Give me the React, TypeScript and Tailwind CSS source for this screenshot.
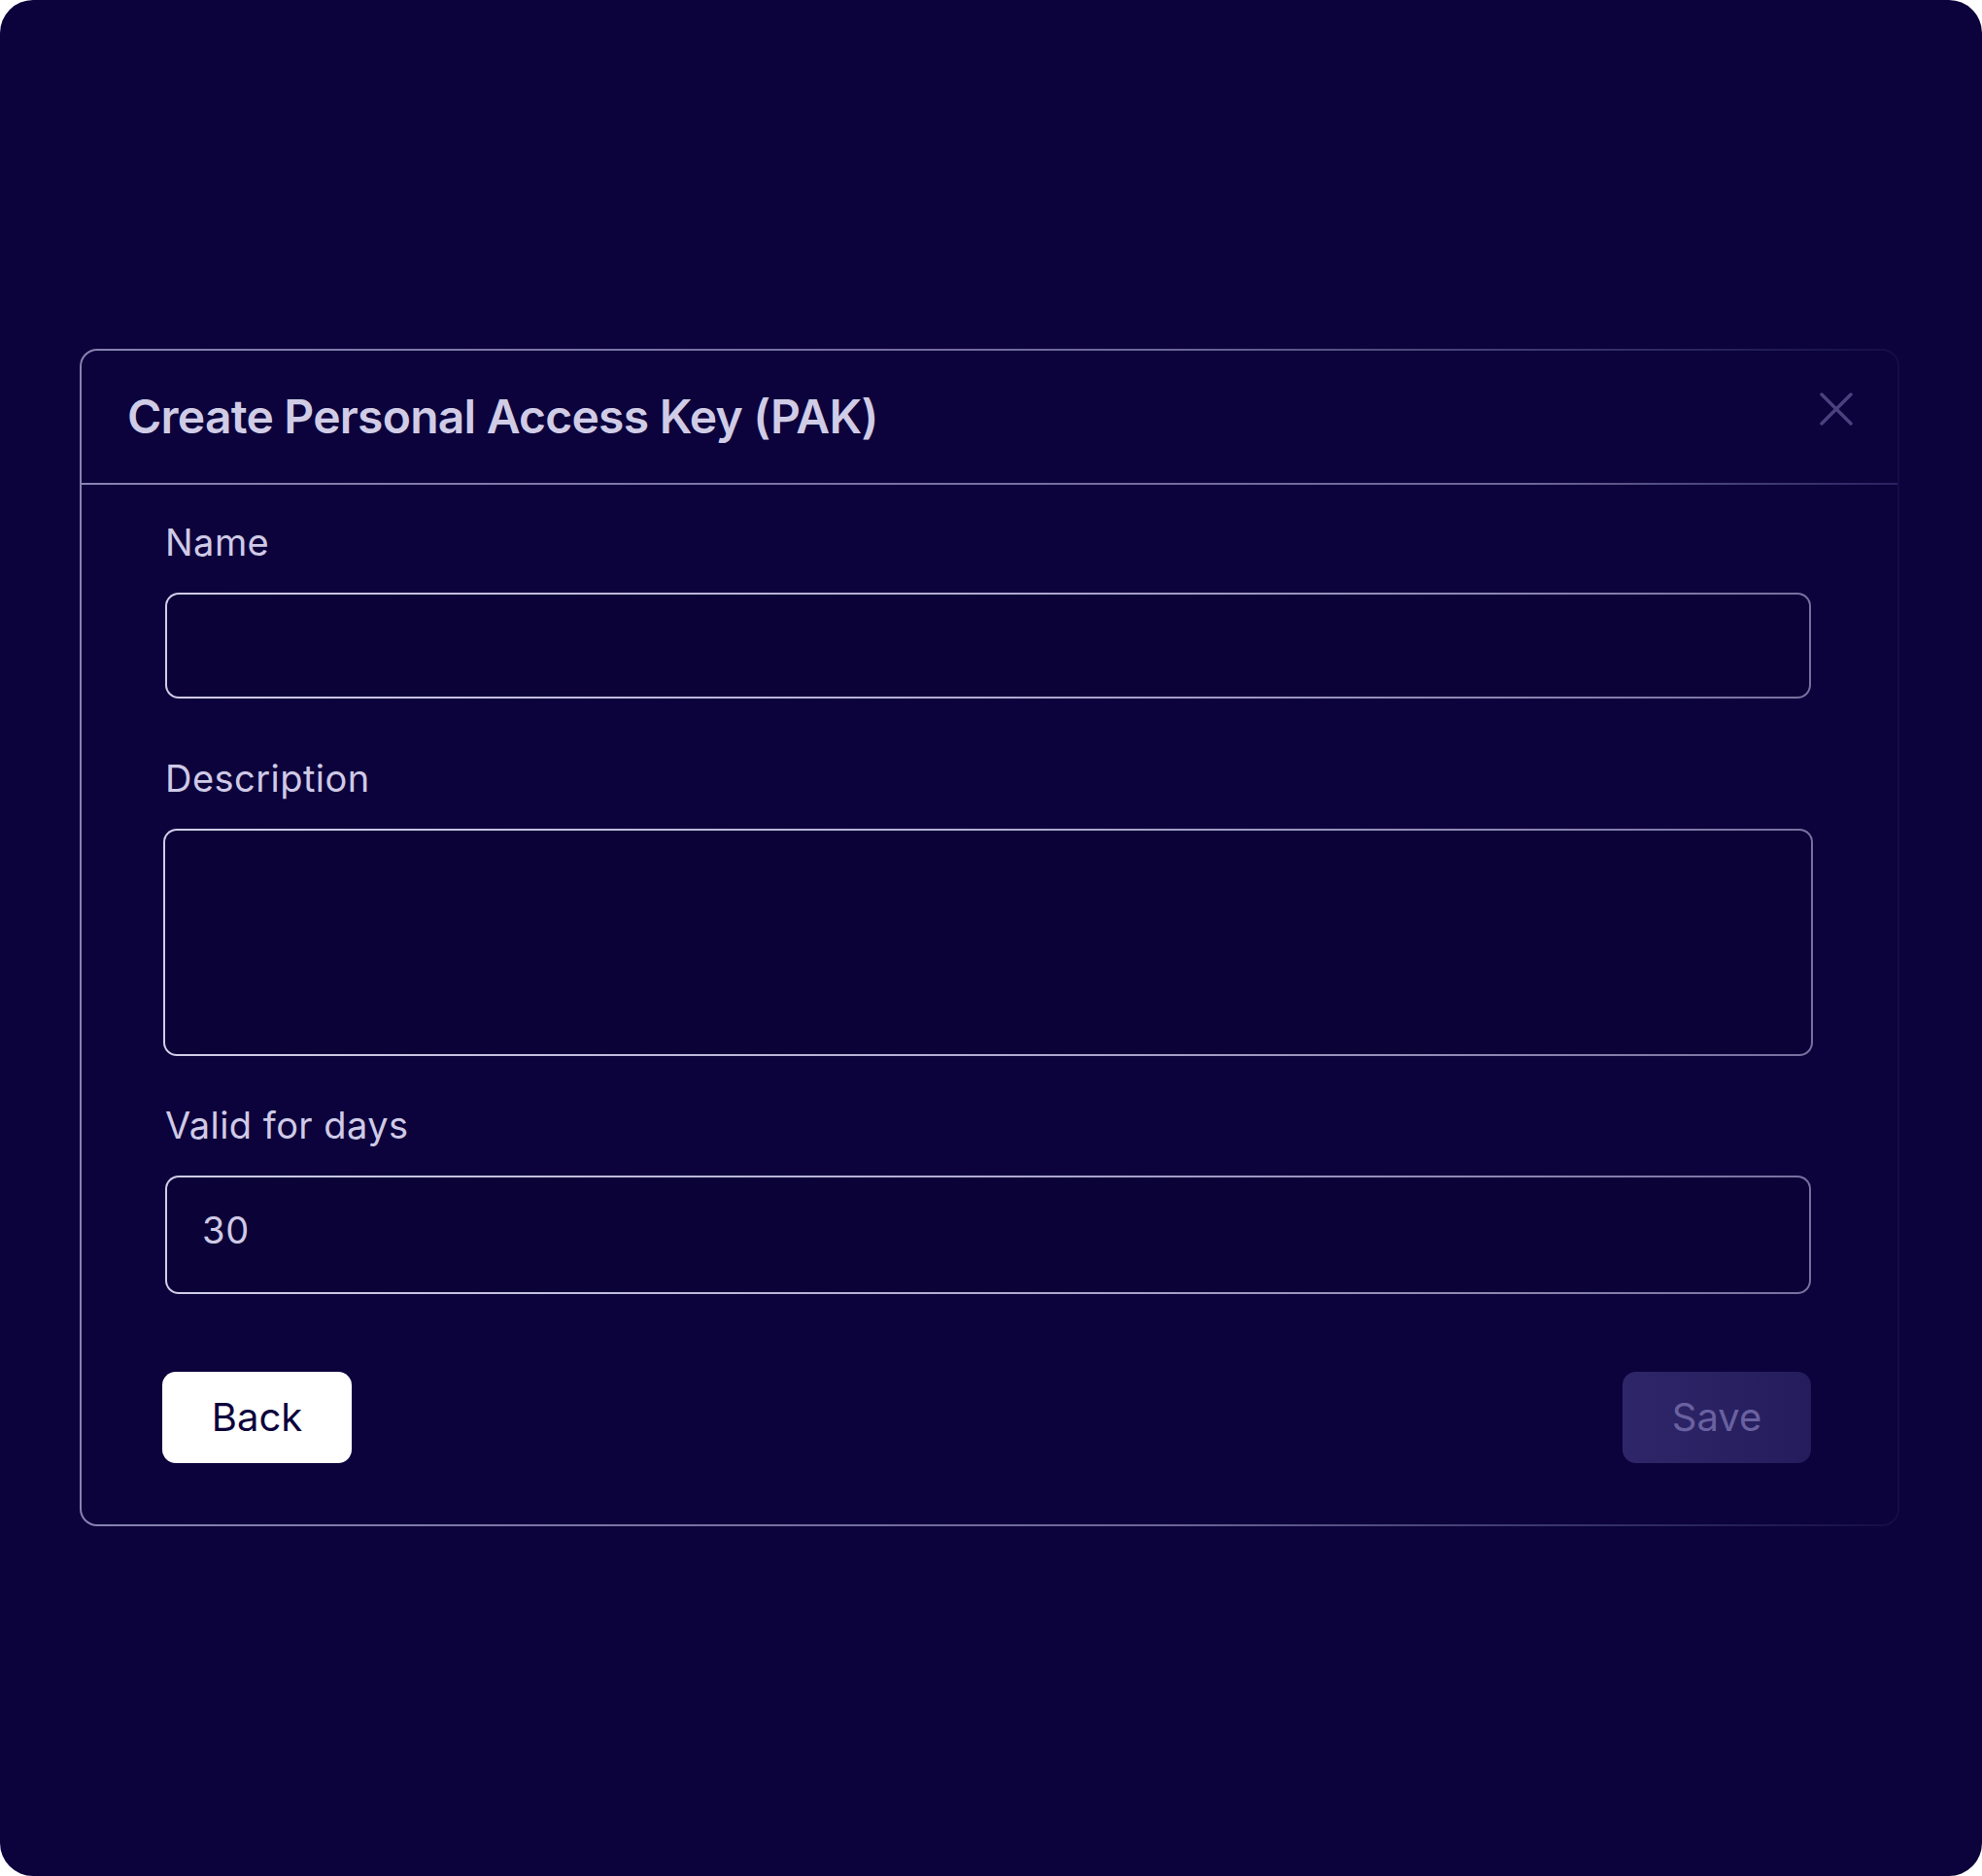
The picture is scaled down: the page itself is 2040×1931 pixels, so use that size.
function CloseIcon() {
  return (
    <svg width="34" height="34" viewBox="0 0 34 34" fill="none" className="-mt-[16px] text-[#4a427e]">
      <path d="M2 2L32 32M32 2L2 32" stroke="currentColor" strokeWidth="3.5" strokeLinecap="round" />
    </svg>
  );
}

function Field({
  label,
  height,
  value,
  wide,
}: {
  label: string;
  height: string;
  value?: string;
  wide?: boolean;
}) {
  return (
    <div className="flex flex-col">
      <div className="text-[38px] leading-[40px] tracking-[0.012em] text-[#cfcae6]">{label}</div>
      <div
        className={`mt-[32px] rounded-[14px] bg-linear-to-r from-[#d2cde8] via-[#b3acd2] to-[#77709f] p-[2px] ${
          wide ? "-mx-[2px]" : ""
        }`}
      >
        <div
          className={`${height} flex items-center rounded-[12px] bg-[#0b0238] px-[36px] pb-[10px] text-[38px] tracking-[0.02em] text-[#cfcae6]`}
        >
          {value}
        </div>
      </div>
    </div>
  );
}

export default function App() {
  return (
    <div className="bg-white" style={{ fontFamily: "Inter, 'Noto Sans', sans-serif" }}>
      <div className="h-[1931px] w-[2040px] rounded-[34px] bg-[#0c023c] pl-[82px] pt-[359px]">
        <div className="w-[1873px] rounded-[18px] bg-linear-to-r from-[#8982b2] via-[#6d6698] via-60% to-[#140c46] p-[2px]">
          <div className="rounded-[16px] bg-[#0c023c]">
            <div className="flex h-[136px] items-center justify-between pl-[47px] pr-[46px]">
              <h1 className="text-[48px] font-semibold tracking-[-0.016em] text-[#d0cce6]">
                Create Personal Access Key (PAK)
              </h1>
              <CloseIcon />
            </div>
            <div className="h-[2px] bg-linear-to-r from-[#8982b2] via-[#6d6698] via-80% to-[#2a2260]" />
            <div className="pb-[63px] pl-[86px] pr-[89px] pt-[39px]">
              <Field label="Name" height="h-[105px]" />
              <div className="mt-[62px]">
                <Field label="Description" height="h-[230px]" wide />
              </div>
              <div className="mt-[51px]">
                <Field label="Valid for days" height="h-[118px]" value="30" />
              </div>
              <div className="mt-[80px] flex items-center justify-between">
                <button className="-ml-[3px] flex h-[94px] w-[195px] items-center justify-center rounded-[14px] bg-white text-[40px] text-[#0c023c]">
                  Back
                </button>
                <button className="flex h-[94px] w-[194px] items-center justify-center rounded-[14px] bg-linear-to-r from-[#2e2668] to-[#241c5c] text-[40px] text-[#6a61a0]">
                  Save
                </button>
              </div>
            </div>
          </div>
        </div>
      </div>
    </div>
  );
}
